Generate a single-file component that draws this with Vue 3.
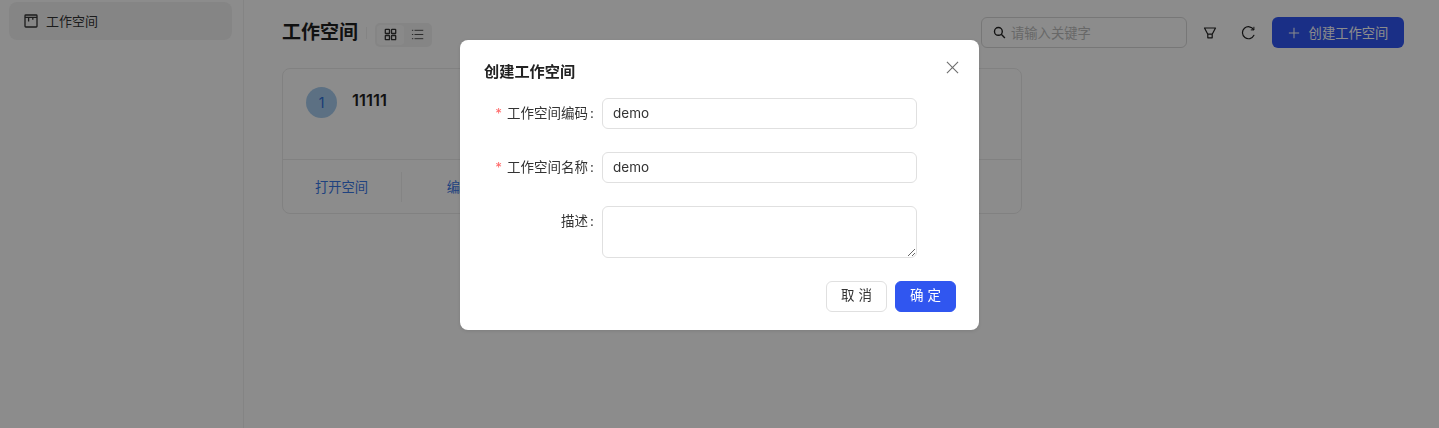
<script setup>
const actions = ['打开空间', '编辑', '复制', '导出', '成员', '删除']
</script>

<template>
  <div class="page">
    <aside class="sidebar">
      <div class="nav-item">
        <svg class="nav-icon" viewBox="0 0 14 14" fill="none" stroke="currentColor" stroke-width="1.3">
          <rect x="1" y="1" width="12" height="12" rx="0.8" />
          <path d="M1 3.4h12M4.6 3.4v4M8.8 3.4v2.4" />
        </svg>
        <span>工作空间</span>
      </div>
    </aside>
    <main class="main">
      <header class="toolbar">
        <h1 class="title">工作空间</h1>
        <span class="title-sep"></span>
        <div class="view-toggle">
          <span class="view-btn active">
            <svg viewBox="0 0 14 14" fill="none" stroke="currentColor" stroke-width="1.4">
              <rect x="1.4" y="1.4" width="4.5" height="4.5" rx="0.6" />
              <rect x="8.1" y="1.4" width="4.5" height="4.5" rx="0.6" />
              <rect x="1.4" y="8.1" width="4.5" height="4.5" rx="0.6" />
              <rect x="8.1" y="8.1" width="4.5" height="4.5" rx="0.6" />
            </svg>
          </span>
          <span class="view-btn">
            <svg viewBox="0 0 14 14" fill="none" stroke="currentColor" stroke-width="1">
              <path d="M3.8 2.5h9.4M3.8 7h9.4M3.8 11.5h9.4M1 2.5h1.4M1 7h1.4M1 11.5h1.4" />
            </svg>
          </span>
        </div>
        <div class="spacer"></div>
        <div class="search">
          <svg class="search-icon" viewBox="0 0 14 14" fill="none" stroke="currentColor" stroke-width="1.5">
            <circle cx="5.8" cy="5.8" r="4.2" />
            <path d="M8.9 8.9l3.9 3.9" />
          </svg>
          <span class="placeholder">请输入关键字</span>
        </div>
        <svg class="tool-icon filter" viewBox="0 0 14 14" fill="none" stroke="currentColor" stroke-width="1.2" stroke-linejoin="round">
          <path d="M1.5 2h11L9.2 8.2H4.8z" />
          <path d="M4.8 8.2v3.6h4.4V8.2" />
        </svg>
        <svg class="tool-icon refresh" viewBox="0 0 14 14" fill="none" stroke="currentColor" stroke-width="1.2" stroke-linecap="round">
          <path d="M12.6 3.6A6 6 0 1 0 12.9 9.3" />
          <path d="M12.9 1.2v2.7h-2.7" stroke-width="1" />
        </svg>
        <button class="create-btn" type="button">
          <svg viewBox="0 0 14 14" fill="none" stroke="currentColor" stroke-width="1.2">
            <path d="M7 1v12M1 7h12" />
          </svg>
          <span>创建工作空间</span>
        </button>
      </header>

      <section class="card">
        <div class="card-body">
          <div class="avatar">1</div>
          <div class="card-name">11111</div>
        </div>
        <div class="card-actions">
          <a v-for="a in actions" :key="a" class="action">{{ a }}</a>
        </div>
      </section>
    </main>

    <div class="mask">
      <div class="modal">
        <svg class="close" viewBox="0 0 14 14" fill="none" stroke="currentColor" stroke-width="1.2">
          <path d="M1 1l12 12M13 1L1 13" />
        </svg>
        <h2 class="modal-title">创建工作空间</h2>
        <form class="form">
          <div class="row">
            <label class="label"><i class="req">*</i>工作空间编码<b class="colon">:</b></label>
            <input class="input" value="demo" />
          </div>
          <div class="row">
            <label class="label"><i class="req">*</i>工作空间名称<b class="colon">:</b></label>
            <input class="input" value="demo" />
          </div>
          <div class="row">
            <label class="label">描述<b class="colon">:</b></label>
            <textarea class="input area"></textarea>
          </div>
        </form>
        <footer class="modal-footer">
          <button class="btn" type="button">取 消</button>
          <button class="btn primary" type="button">确 定</button>
        </footer>
      </div>
    </div>
  </div>
</template>

<style scoped>
.page {
  display: flex;
  height: 428px;
  overflow: hidden;
  background: #fff;
  color: #1f1f1f;
  font-family: Inter, "Noto Sans CJK SC", sans-serif;
}
.sidebar {
  width: 244px;
  box-sizing: border-box;
  flex: none;
  border-right: 1px solid #f0f0f0;
  padding: 2px 11px 0 9px;
}
.nav-item {
  height: 38px;
  border-radius: 8px;
  background: #f3f3f3;
  display: flex;
  align-items: center;
  gap: 8px;
  padding-left: 15px;
  font-size: 13px;
  color: #333;
}
.nav-icon { width: 14px; height: 14px; flex: none; }
.nav-item span { margin-top: -1px; }
.main {
  flex: 1;
  min-width: 0;
  padding: 17px 35px 0 38px;
}
.toolbar {
  display: flex;
  align-items: center;
  height: 31px;
}
.title {
  margin: 0;
  font-size: 19px;
  font-weight: 600;
  line-height: 31px;
  color: #1f1f1f;
}
.title-sep {
  width: 1px;
  height: 12px;
  background: #f0f0f0;
  margin: 0 8px;
}
.view-toggle {
  display: flex;
  width: 57px;
  height: 24px;
  box-sizing: border-box;
  padding: 2px;
  margin-top: 4px;
  background: #f3f3f3;
  border-radius: 5px;
}
.view-btn {
  flex: 1;
  display: flex;
  align-items: center;
  justify-content: center;
  border-radius: 4px;
  color: #444;
}
.view-btn.active { background: #fafafa; flex: 0 0 27px; color: #333; }
.view-btn svg { width: 13px; height: 13px; }
.spacer { flex: 1; }
.search {
  width: 206px;
  height: 31px;
  box-sizing: border-box;
  border: 1px solid #d9d9d9;
  border-radius: 6px;
  display: flex;
  align-items: center;
  gap: 5px;
  padding-left: 11px;
}
.search-icon { width: 13px; height: 13px; color: #222; flex: none; }
.placeholder { font-size: 13.3px; color: #bdbdbd; }
.tool-icon { width: 14px; height: 14px; flex: none; color: #222; }
.filter { margin-left: 16px; }
.refresh { margin-left: 24px; }
.create-btn {
  margin-left: 17px;
  width: 132px;
  height: 31px;
  border: none;
  border-radius: 6px;
  background: #3056f5;
  color: #fff;
  display: flex;
  align-items: center;
  justify-content: center;
  gap: 9px;
  font: 400 13.3px Inter, "Noto Sans CJK SC", sans-serif;
  padding: 0;
}
.create-btn svg { width: 12px; height: 12px; }
.card {
  width: 740px;
  height: 146px;
  box-sizing: border-box;
  margin-top: 20px;
  border: 1px solid #ececec;
  border-radius: 8px;
  display: flex;
  flex-direction: column;
}
.card-body {
  flex: 1;
  display: flex;
  align-items: flex-start;
  gap: 15px;
  padding: 18px 23px;
}
.avatar {
  width: 31px;
  height: 31px;
  border-radius: 50%;
  background: #a8cdee;
  color: #2f6fd8;
  font-size: 14px;
  display: flex;
  align-items: center;
  justify-content: center;
}
.card-name {
  font-size: 16.5px;
  font-weight: 600;
  line-height: 26px;
}
.card-actions {
  height: 53px;
  flex: none;
  border-top: 1px solid #ececec;
  display: flex;
  align-items: center;
}
.action {
  width: 120px;
  box-sizing: border-box;
  text-align: center;
  font-size: 13.3px;
  line-height: 30px;
  color: #3a78e8;
  border-right: 1px solid #f0f0f0;
}
.action:first-child { width: 119px; padding-right: 1px; }
.action:nth-child(2) { padding-right: 3px; }
.action:last-child { border-right: none; }
.mask {
  position: fixed;
  inset: 0;
  background: rgba(0, 0, 0, 0.45);
}
.modal {
  position: relative;
  width: 519px;
  height: 290px;
  box-sizing: border-box;
  margin: 40px auto 0;
  background: #fff;
  border-radius: 8px;
  padding: 21px 23px 19px 24px;
  color: #333;
  box-shadow: 0 1px 4px rgba(0, 0, 0, 0.12);
}
.close {
  position: absolute;
  top: 21px;
  right: 20px;
  width: 13px;
  height: 13px;
  color: #6f6f6f;
}
.modal-title {
  margin: 0;
  font-size: 15.2px;
  font-weight: 600;
  line-height: 21px;
  color: #222;
}
.form {
  display: flex;
  flex-direction: column;
  gap: 23.5px;
  margin-top: 16px;
}
.row {
  display: flex;
  align-items: flex-start;
}
.label {
  width: 110px;
  flex: none;
  margin-right: 8px;
  text-align: right;
  font-size: 13.5px;
  line-height: 30px;
  color: #333;
  white-space: nowrap;
}
.colon {
  font-weight: 400;
  margin-left: 2px;
}
.req {
  font-style: normal;
  color: #ff6a6a;
  margin-right: 5px;
}
.input {
  width: 315px;
  height: 30.5px;
  box-sizing: border-box;
  border: 1px solid #e0e0e0;
  border-radius: 6px;
  padding: 0 10px;
  font: 400 13.5px Inter, "Noto Sans CJK SC", sans-serif;
  color: #333;
  background: #fff;
  outline: none;
  display: block;
}
.area {
  height: 51.5px;
  resize: vertical;
  padding: 5px 10px;
}
.modal-footer {
  display: flex;
  justify-content: flex-end;
  gap: 8px;
  margin-top: 23.5px;
}
.btn {
  width: 61px;
  height: 30.5px;
  box-sizing: border-box;
  border: 1px solid #e0e0e0;
  border-radius: 6px;
  background: #fff;
  color: #333;
  font: 400 13.5px/1 Inter, "Noto Sans CJK SC", sans-serif;
  padding: 0 0 2px;
}
.btn.primary {
  border-color: #3056f0;
  background: #3056f0;
  color: #fff;
}
</style>
